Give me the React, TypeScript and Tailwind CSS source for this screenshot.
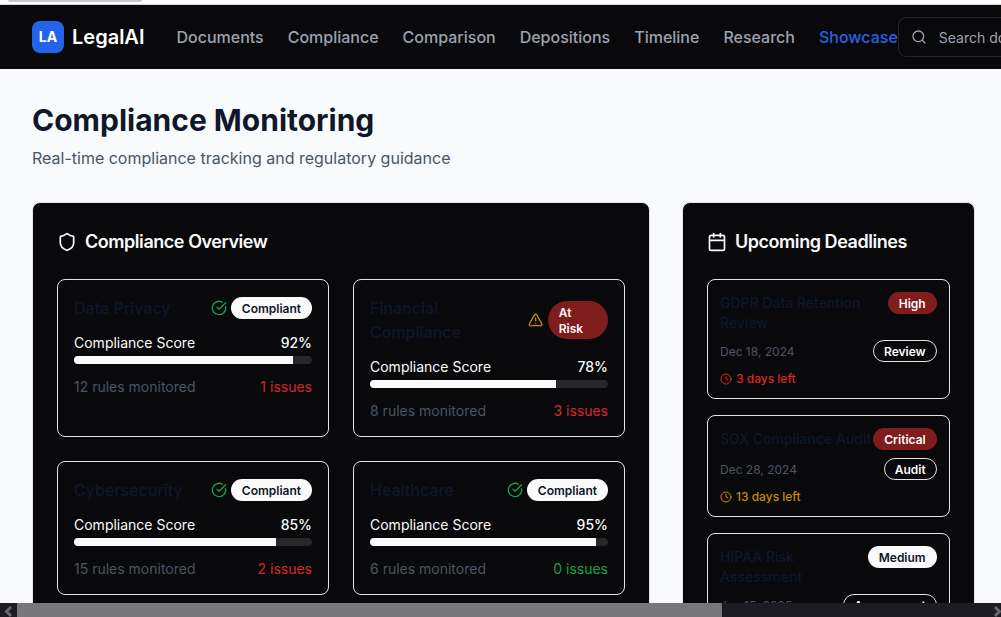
import { AlertTriangle, Calendar, CircleCheckBig, Clock, Search, Shield } from "lucide-react";

const navLinks = ["Documents", "Compliance", "Comparison", "Depositions", "Timeline", "Research"];

const areas = [
  { name: "Data Privacy", score: 92, rules: 12, issues: 1, ok: true },
  { name: "Financial Compliance", score: 78, rules: 8, issues: 3, ok: false },
  { name: "Cybersecurity", score: 85, rules: 15, issues: 2, ok: true },
  { name: "Healthcare", score: 95, rules: 6, issues: 0, ok: true },
];

const deadlines = [
  { title: "GDPR Data Retention Review", date: "Dec 18, 2024", tag: "Review", level: "High", left: "3 days left", urgent: true },
  { title: "SOX Compliance Audit", date: "Dec 28, 2024", tag: "Audit", level: "Critical", left: "13 days left", urgent: false },
  { title: "HIPAA Risk Assessment", date: "Jan 15, 2025", tag: "Assessment", level: "Medium", left: "31 days left", urgent: false },
];

const Badge = ({ level }: { level: string }) =>
  level === "Medium" || level === "Compliant" ? (
    <span className="shrink-0 rounded-full border border-transparent bg-[#fafafa] px-2.5 py-0.5 text-xs font-semibold text-[#0f172a]">
      <span className="block translate-y-px">{level}</span>
    </span>
  ) : (
    <span className="rounded-full border border-transparent bg-[#7f1d1d] px-2.5 py-0.5 text-xs font-semibold text-[#fafafa]">
      <span className="block translate-y-px">{level}</span>
    </span>
  );

const AreaCard = ({ area }: { area: (typeof areas)[number] }) => (
  <div className="rounded-lg border border-[#e4e4e7] bg-[#09090b] p-4">
    <div className="mb-3 flex items-center justify-between">
      <h3 className="font-medium text-[#0f172a]">{area.name}</h3>
      <div className="flex items-center gap-1">
        {area.ok ? (
          <CircleCheckBig className="h-4 w-4 text-[#16a34a]" />
        ) : (
          <AlertTriangle className="h-4 w-4 text-[#ca8a04]" />
        )}
        <Badge level={area.ok ? "Compliant" : "At Risk"} />
      </div>
    </div>
    <div className="mb-1 flex translate-y-px justify-between text-sm text-[#fafafa]">
      <span>Compliance Score</span>
      <span className="font-medium">{area.score}%</span>
    </div>
    <div className="h-2 overflow-hidden rounded-full bg-[#27272a]">
      <div className="h-full bg-[#fafafa]" style={{ width: `${area.score}%` }} />
    </div>
    <div className="mt-3 flex translate-y-px justify-between text-sm">
      <span className="text-[#4b5563]">{area.rules} rules monitored</span>
      <span className={area.issues === 0 ? "text-[#16a34a]" : "text-[#dc2626]"}>{area.issues} issues</span>
    </div>
  </div>
);

const DeadlineCard = ({ item }: { item: (typeof deadlines)[number] }) => (
  <div className="rounded-lg border border-[#e4e4e7] bg-[#09090b] p-3">
    <div className="mb-2 flex items-start justify-between">
      <h4 className="translate-y-px text-sm font-medium text-[#0f172a]">{item.title}</h4>
      <Badge level={item.level} />
    </div>
    <div className="mb-2 flex items-center justify-between">
      <span className="translate-y-px text-xs text-[#4b5563]">{item.date}</span>
      <span className="rounded-full border border-[#e4e4e7] px-2.5 py-0.5 text-xs font-semibold text-[#fafafa]">
        <span className="block translate-y-px">{item.tag}</span>
      </span>
    </div>
    <div className={`flex translate-y-px items-center gap-1 text-xs font-medium ${item.urgent ? "text-[#dc2626]" : "text-[#ca8a04]"}`}>
      <Clock className="h-3 w-3" />
      <span>{item.left}</span>
    </div>
  </div>
);

export default function App() {
  return (
    <div className="relative h-[617px] w-[1001px] overflow-hidden bg-[#f8fafc] font-['Inter',sans-serif]">
      {/* strip left over above the page */}
      <div className="h-[5px] border-b border-[#d4d4d8] bg-white">
        <div className="ml-[8px] h-[2px] w-[134px] rounded-b bg-[#c8c8c8]" />
      </div>

      <header className="flex h-[64px] w-[1400px] items-center bg-[#09090b] px-8">
        <div className="flex items-center gap-2">
          <div className="flex h-8 w-8 items-center justify-center rounded-lg bg-[#2563eb] text-sm font-bold text-white">LA</div>
          <span className="text-xl font-semibold text-white">LegalAI</span>
        </div>
        <nav className="ml-8 flex items-center gap-6 font-medium text-[#9ca3af]">
          {navLinks.map((link) => (
            <a key={link}>{link}</a>
          ))}
          <a className="text-[#2563eb]">Showcase</a>
        </nav>
        <div className="flex h-10 w-64 items-center gap-3 rounded-lg border border-[#27272a] pl-3">
          <Search className="h-4 w-4 text-[#9ca3af]" />
          <span className="pt-px text-sm text-[#9ca3af]">Search documents...</span>
        </div>
      </header>

      <main className="px-8 pt-[33px]">
        <h1 className="text-3xl font-bold leading-9 text-[#0f172a]">Compliance Monitoring</h1>
        <p className="mt-2 text-[#4b5563]">Real-time compliance tracking and regulatory guidance</p>

        <div className="mt-[32.48px] grid w-[942.7px] grid-cols-[617.6px_292.7px] gap-x-[32.4px]">
          <section className="rounded-lg border border-[#e4e4e7] bg-[#09090b] py-6 pl-6 pr-[23.6px]">
            <h2 className="mb-6 flex translate-y-px items-center gap-2 text-lg font-semibold leading-7 tracking-tight text-[#fafafa]">
              <Shield className="h-5 w-5" />
              Compliance Overview
            </h2>
            <div className="grid grid-cols-2 gap-6">
              {areas.map((area) => (
                <AreaCard key={area.name} area={area} />
              ))}
            </div>
          </section>

          <section className="rounded-lg border border-[#e4e4e7] bg-[#09090b] p-6">
            <h2 className="mb-6 flex translate-y-px items-center gap-2 text-lg font-semibold leading-7 tracking-tight text-[#fafafa]">
              <Calendar className="h-5 w-5" />
              Upcoming Deadlines
            </h2>
            <div className="space-y-4">
              {deadlines.map((item) => (
                <DeadlineCard key={item.title} item={item} />
              ))}
            </div>
          </section>
        </div>
      </main>

      {/* page scrollbar */}
      <div className="absolute inset-x-0 bottom-0 flex h-[14px] items-stretch bg-[#1c1c22]">
        <div className="flex w-[17px] items-center pl-1 pt-[2px]">
          <svg width="9" height="11" viewBox="0 0 9 11" fill="none" stroke="#66666b" strokeWidth="3">
            <polyline points="7,1 2.5,5.5 7,10" />
          </svg>
        </div>
        <div className="w-[705px] bg-[#77777b]" />
        <div className="ml-auto flex w-[8px] items-center pt-[2px]">
          <svg className="shrink-0" width="9" height="11" viewBox="0 0 9 11" fill="none" stroke="#66666b" strokeWidth="3">
            <polyline points="2,1 6.5,5.5 2,10" />
          </svg>
        </div>
      </div>
    </div>
  );
}
